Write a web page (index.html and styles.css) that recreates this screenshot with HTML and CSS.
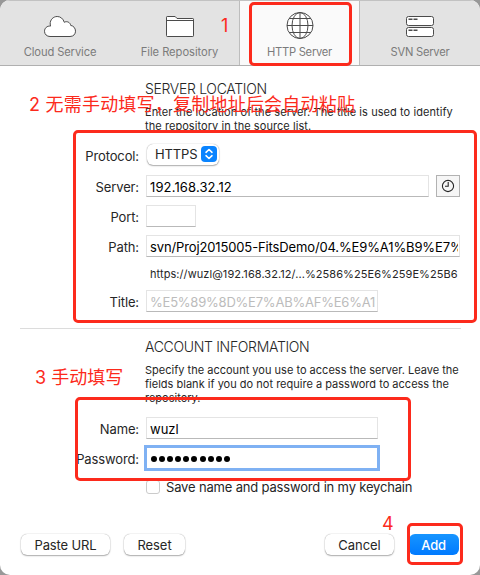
FILE: index.html
```html
<!DOCTYPE html>
<html lang="en">
<head>
<meta charset="utf-8">
<title>Add Repository</title>
<link rel="stylesheet" href="styles.css">
</head>
<body>
<div class="backdrop">
<main class="dialog">
  <nav class="tabs">
    <div class="tab">
      <svg class="icon" width="34" height="30" viewBox="0 0 34 30"><path d="M7 21.5H27C30.6 21.5 32.5 19 32.5 16.2C32.5 13.2 30.5 10.8 27.7 10.4C27.3 7.4 23.8 5.7 21.3 7.3C20.2 3.6 17.4 1.5 14.2 1.5C10.2 1.5 7 4.8 7.2 9C7.2 9.8 7.3 10.4 7.5 11.1C4.1 10.7 1.5 13.1 1.5 16.3C1.5 19.3 3.9 21.5 7 21.5Z"/></svg>
      <span class="t-cloud">Cloud Service</span>
    </div>
    <div class="tab">
      <svg class="icon" width="34" height="30" viewBox="0 0 34 30"><path d="M3.5 20.5V2.2Q3.5 1.5 4.2 1.5H12.2L14 3.5H29.8Q30.5 3.5 30.5 4.2V20.8Q30.5 21.5 29.8 21.5H4.2Q3.5 21.5 3.5 20.5ZM3.5 5.5H30.5"/></svg>
      <span class="t-file">File Repository</span>
    </div>
    <div class="tab selected">
      <svg class="icon" width="34" height="30" viewBox="0 0 34 30"><circle cx="17" cy="10.5" r="13"/><path class="line" d="M17-2.5V23.5M4 10.5H30M6.2 3.5H27.8M6.2 17.5H27.8"/><ellipse class="line" cx="17" cy="10.5" rx="8" ry="13"/></svg>
      <span class="t-http">HTTP Server</span>
    </div>
    <div class="tab">
      <svg class="icon" width="34" height="30" viewBox="0 0 34 30"><rect x="3.5" y="1.5" width="27" height="9" rx="2"/><rect x="3.5" y="12.5" width="27" height="9" rx="2"/><path class="dash" d="M5.5 4.3H9.5M10.5 4.3H14.5M5.5 15.3H9.5M10.5 15.3H14.5"/></svg>
      <span class="t-svn">SVN Server</span>
    </div>
  </nav>

  <section class="group server">
    <h2><span class="t-loc">SERVER LOCATION</span></h2>
    <p><span class="t-l1">Enter the location of the server. The title is used to identify</span><br><span class="t-l2">the repository in the source list.</span></p>
    <div class="row protocol"><label>Protocol:</label>
      <button class="popup"><span class="t-https">HTTPS</span><svg width="16" height="16" viewBox="0 0 16 16"><rect width="16" height="16" rx="4"/><path d="M5 6.3L8 3.5L11 6.3M5 9.7L8 12.5L11 9.7"/></svg></button></div>
    <div class="row"><label>Server:</label><div class="field wide"><span class="t-ip">192.168.32.12</span></div>
      <button class="history"><svg width="14" height="14" viewBox="0 0 14 14"><circle cx="7" cy="7" r="5.6"/><path d="M7.2 3V7.2H4"/></svg></button></div>
    <div class="row"><label>Port:</label><div class="field tiny"></div></div>
    <div class="row"><label>Path:</label><div class="field full"><span class="t-path">svn/Proj2015005-FitsDemo/04.%E9%A1%B9%E7%</span></div></div>
    <div class="row url"><label></label><span class="t-url">https://wuzl@192.168.32.12/...%2586%25E6%259E%25B6</span></div>
    <div class="row title"><label>Title:</label><div class="field mid placeholder"><span class="t-title">%E5%89%8D%E7%AB%AF%E6%A1%</span></div></div>
  </section>

  <hr>

  <section class="group account">
    <h2><span class="t-acc">ACCOUNT INFORMATION</span></h2>
    <p><span class="t-l3">Specify the account you use to access the server. Leave the</span><br><span class="t-l4">fields blank if you do not require a password to access the</span><br><span class="t-l5">repository.</span></p>
    <div class="row"><label>Name:</label><div class="field mid"><span class="t-name">wuzl</span></div></div>
    <div class="row"><label>Password:</label><div class="field mid focused"><span class="dots"><i></i><i></i><i></i><i></i><i></i><i></i><i></i><i></i><i></i><i></i></span></div></div>
    <div class="row save"><label></label><span class="check"></span><span class="t-save">Save name and password in my keychain</span></div>
  </section>

  <footer>
    <button class="btn paste">Paste URL</button>
    <button class="btn reset">Reset</button>
    <button class="btn cancel">Cancel</button>
    <button class="btn add">Add</button>
  </footer>
</main>
<div class="mark m1"></div>
<div class="mark m2"></div>
<div class="mark m3"></div>
<div class="mark m4"></div>
<span class="note n1">1</span>
<span class="note n2">2 无需手动填写，复制地址后会自动粘贴</span>
<span class="note n3">3 手动填写</span>
<span class="note n4">4</span>
</div>
</body>
</html>
```
FILE: styles.css
```css
* { box-sizing: border-box; }
body { margin: 0; font-family: Inter, "Liberation Sans", sans-serif; font-size: 13px; color: #262626; }
.backdrop { position: relative; width: 480px; height: 575px; background: #989898; overflow: hidden; }
.dialog { width: 480px; height: 575px; background: #fff; border-radius: 10px; overflow: hidden; }
span { white-space: nowrap; }

.tabs { display: grid; grid-template-columns: 119px 120px 121px 120px; height: 66px; background: #e3e3e3; border-top: 1px solid #c2c2c2; border-bottom: 1px solid #b0b0b0; }
.tab { display: flex; flex-direction: column; align-items: center; padding: 14px 0 0 1px; font-size: 11.2px; line-height: 14px; letter-spacing: -.12px; color: #7b7b7b; }
.tab.selected { padding-left: 0; background: #fafafa; border-left: 1px solid #bdbdbd; border-right: 1px solid #bdbdbd; }
.tab:last-child { padding-left: 0; }
.t-http, .t-svn { letter-spacing: -.25px; }
.t-file { letter-spacing: -.05px; }
.icon { overflow: visible; fill: #fff; stroke: #4b4b4b; stroke-width: 1; }
.icon .line { fill: none; }
.icon .dash { stroke-width: 1.4; }

h2 { margin: 0 0 0 145px; height: 20px; font-size: 14px; line-height: 20px; font-weight: 300; letter-spacing: -.32px; }
p { margin: 6px 0 0 145px; font-size: 11px; line-height: 14px; }
.t-l1, .t-l2 { letter-spacing: .07px; }
.t-l3, .t-l4 { letter-spacing: .01px; }
.server h2 { margin-top: 13px; }
.server p { height: 38px; }
.row { display: flex; height: 22px; margin-bottom: 8px; align-items: center; }
.row label { width: 139px; margin-right: 7px; flex: none; display: flex; justify-content: flex-end; letter-spacing: -.12px; line-height: 16px; padding-top: 1px; }
.protocol { height: 24px; }
.field { height: 22px; flex: none; border: 1px solid #e4e4e4; border-bottom-color: #b9b9b9; padding: 0 1px 0 3px; line-height: 22px; color: #000; background: #fff; }
.field span { display: block; overflow: hidden; }
.wide { width: 283px; }
.tiny { width: 50px; }
.full { width: 314px; }
.mid { width: 232px; }
.t-ip { letter-spacing: .13px; }
.t-path { letter-spacing: -.13px; }
.t-title { letter-spacing: -.22px; }
.placeholder { color: #bcbcbc; }
button { font: inherit; color: #262626; padding: 0; }
.popup { width: 72px; height: 21px; margin-left: 1px; margin-top: -2px; padding: 0 2px 0 8px; display: flex; align-items: center; justify-content: space-between; border: 0; border-radius: 6px; background: #fff; box-shadow: 0 0 1px rgba(0,0,0,.4), 0 1px 1.5px rgba(0,0,0,.3); }
.t-https { letter-spacing: -.15px; }
.popup rect { fill: #0a84ff; }
.popup path { fill: none; stroke: #fff; stroke-width: 1.6; stroke-linecap: round; stroke-linejoin: round; }
.history { width: 24px; height: 22px; margin-left: 7px; border: 1px solid #b2b2b2; background: #f6f6f6; display: flex; align-items: center; justify-content: center; }
.history svg { fill: none; stroke: #262626; stroke-width: 1.1; }
.url { height: 16px; margin: 9px 0 8px; font-size: 11px; letter-spacing: .07px; }
.url span { margin-left: 4px; }
.title { margin-bottom: 0; }
hr { margin: 16px 19px 0 20px; height: 1px; border: 0; background: #dcdcdc; }

.account h2 { margin-top: 8px; }
.account p { height: 54px; }
.focused { outline: 3px solid #7fb1f3; outline-offset: -1px; border-color: #5b96e3; }
.field .dots { display: flex; gap: 2.1px; height: 21px; align-items: center; padding-left: 1px; }
.dots i { width: 6px; height: 6px; border-radius: 50%; background: #000; }
.save { height: 16px; margin: 10px 0 0; }
.t-save { letter-spacing: -.17px; }
.check { width: 14px; height: 14px; border: 1px solid #cbcbcb; border-radius: 3px; margin-right: 6px; }
footer { display: flex; margin: 39px 20px 0; }
.btn { height: 21px; border: 0; border-radius: 6px; background: #fff; letter-spacing: -.05px; box-shadow: 0 0 1px rgba(0,0,0,.4), 0 1px 1.5px rgba(0,0,0,.3); }
.paste { width: 89px; margin-left: 1px; letter-spacing: -.15px; }
.reset { width: 61px; margin-left: 14px; }
.cancel { width: 69px; margin-left: 140px; }
.add { width: 50px; margin-left: 15px; padding-right: 1px; color: #fff; font-weight: 500; letter-spacing: -.3px; background: linear-gradient(#1795ff, #007aff); box-shadow: none; }

.mark { position: absolute; border: 3px solid #fc2a1c; border-radius: 5px; }
.m1 { left: 249px; top: 2px; width: 103px; height: 64px; }
.m2 { left: 73px; top: 130px; width: 404px; height: 193px; }
.m3 { left: 75px; top: 397px; width: 336px; height: 84px; }
.m4 { left: 407px; top: 523px; width: 56px; height: 42px; }
.note { position: absolute; color: #fc2a1c; font-size: 18px; line-height: 24px; font-family: Inter, "Noto Sans CJK SC", sans-serif; font-weight: 400; }
.n1 { left: 221px; top: 14px; }
.n2 { left: 29px; top: 93px; letter-spacing: .22px; }
.n3 { left: 35px; top: 366px; }
.n4 { left: 382px; top: 512px; }
```
